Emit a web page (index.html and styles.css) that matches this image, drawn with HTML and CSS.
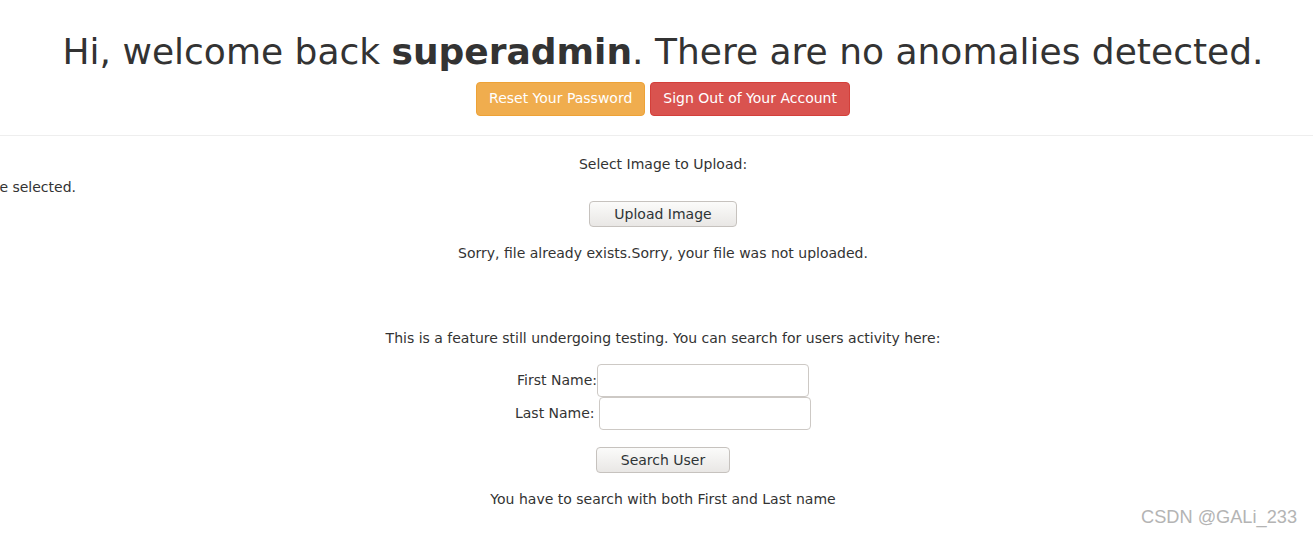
FILE: index.html
```html
<!DOCTYPE html>
<html>
<head>
<meta charset="utf-8">
<link rel="stylesheet" href="styles.css">
</head>
<body>
<div class="page">
  <header class="welcome">
    <h1 class="title">Hi, welcome back <b>superadmin</b>. There are no anomalies detected.</h1>
    <div class="actions">
      <button class="btn btn-warning">Reset Your Password</button>
      <button class="btn btn-danger">Sign Out of Your Account</button>
    </div>
  </header>
  <hr class="rule">
  <section class="upload">
    <p class="line">Select Image to Upload:</p>
    <div class="file-row"><span class="file-text">No file selected.</span></div>
    <div class="center"><button class="gbtn gbtn-upload">Upload Image</button></div>
    <p class="line msg">Sorry, file already exists.Sorry, your file was not uploaded.</p>
  </section>
  <section class="search">
    <p class="line">This is a feature still undergoing testing. You can search for users activity here:</p>
    <div class="field first"><span class="lbl">First Name:</span><input class="inp" type="text"></div>
    <div class="field"><span class="lbl">Last Name: </span><input class="inp" type="text"></div>
    <div class="center"><button class="gbtn gbtn-search">Search User</button></div>
    <p class="line note">You have to search with both First and Last name</p>
  </section>
</div>
<div class="watermark">CSDN @GALi_233</div>
</body>
</html>
```

FILE: styles.css
```css
html, body {
  margin: 0;
  padding: 0;
  background: #fff;
}
body {
  font-family: "DejaVu Sans", sans-serif;
  font-size: 14px;
  line-height: 20px;
  color: #333;
  overflow: hidden;
}
.page {
  width: 1326px;
}
.welcome {
  display: flex;
  flex-direction: column;
  align-items: center;
  padding-top: 32px;
}
.title {
  margin: 0;
  font-size: 36px;
  line-height: 40px;
  font-weight: 500;
  white-space: nowrap;
}
.title b {
  font-weight: 700;
}
.actions {
  display: flex;
  gap: 5px;
  margin-top: 10px;
}
.btn {
  font-family: "DejaVu Sans", sans-serif;
  font-size: 14px;
  line-height: 19px;
  padding: 6px 12px 7px;
  border: 1px solid transparent;
  border-radius: 4px;
  color: #fff;
}
.btn-warning {
  background: #f0ad4e;
  border-color: #eea236;
}
.btn-danger {
  background: #d9534f;
  border-color: #d43f3a;
}
.rule {
  margin: 19px 0 0 0;
  width: 1313px;
  border: 0;
  border-top: 1px solid #eee;
  height: 0;
}
.line {
  margin: 0;
  text-align: center;
}
.upload {
  padding-top: 18px;
}
.file-row {
  margin-top: 3px;
  width: 76px;
  overflow: hidden;
  display: flex;
  justify-content: flex-end;
  white-space: nowrap;
}
.file-text {
  flex: none;
}
.center {
  display: flex;
  justify-content: center;
}
.gbtn {
  font-family: "DejaVu Sans", sans-serif;
  font-size: 14px;
  height: 26px;
  padding: 0;
  white-space: nowrap;
  color: #2e3436;
  background: linear-gradient(#fbfbfa, #e9e7e5);
  border: 1px solid #c6c2be;
  border-radius: 4px;
}
.gbtn-upload {
  margin-top: 4px;
  width: 148px;
}
.gbtn-search {
  margin-top: 17px;
  width: 134px;
}
.msg {
  margin-top: 16px;
}
.search {
  padding-top: 65px;
}
.field {
  height: 33px;
  display: flex;
  justify-content: center;
  align-items: center;
}
.field.first {
  margin-top: 16px;
}
.lbl {
  white-space: pre;
  line-height: 18px;
  margin-bottom: 2px;
}
.inp {
  box-sizing: border-box;
  width: 212px;
  height: 33px;
  margin: 0;
  border: 1px solid #cdc9c5;
  border-radius: 4px;
  background: #fff;
  padding: 0 4px;
  font-family: "DejaVu Sans", sans-serif;
  font-size: 14px;
}
.field + .field .inp {
  margin-left: 0;
}
.note {
  margin-top: 16px;
}
.watermark {
  position: absolute;
  right: 16px;
  top: 506px;
  font-family: "Liberation Sans", Arial, sans-serif;
  font-size: 18.2px;
  line-height: 22px;
  color: #b4b4b4;
  text-shadow: 0 0 1px #fff;
}
```
